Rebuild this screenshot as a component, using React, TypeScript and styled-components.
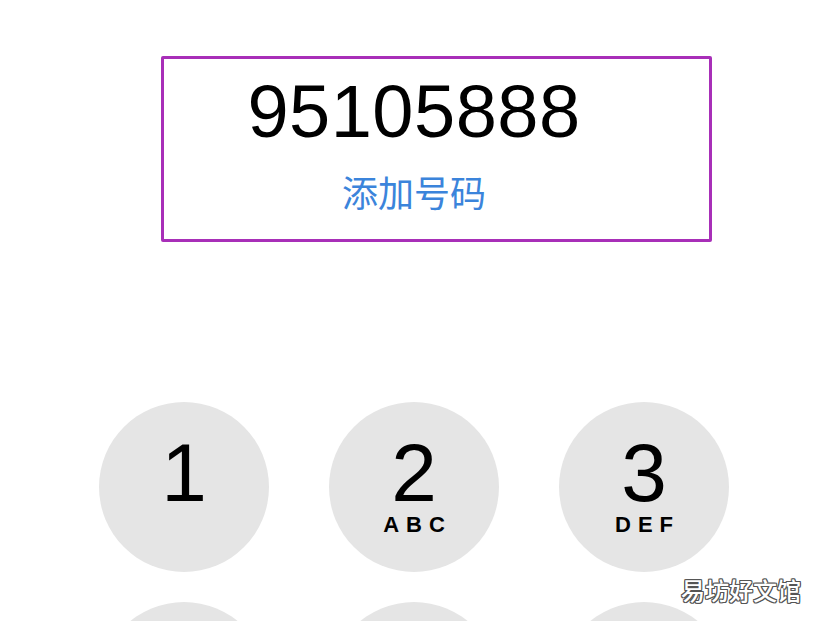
import React from 'react';
import styled, { createGlobalStyle } from 'styled-components';

const GlobalStyle = createGlobalStyle`
  html, body {
    margin: 0;
    padding: 0;
    background: #ffffff;
    overflow: hidden;
  }
  body {
    font-family: "Liberation Sans", Arial, sans-serif;
  }
`;

const Screen = styled.section`
  position: relative;
  width: 828px;
  height: 621px;
  display: flex;
  flex-direction: column;
  align-items: center;
  overflow: hidden;
`;

const Display = styled.div`
  display: flex;
  flex-direction: column;
  align-items: center;
  padding-top: 75px;
`;

const Number = styled.div`
  font-size: 74px;
  line-height: 74px;
  color: #000;
  letter-spacing: 0.5px;
`;

const AddNumber = styled.a`
  margin-top: 24px;
  font-family: "Noto Sans CJK SC", sans-serif;
  font-size: 36px;
  line-height: 36px;
  color: #3b84db;
  cursor: pointer;
`;

const Highlight = styled.div`
  position: absolute;
  left: 161px;
  top: 56px;
  width: 545px;
  height: 180px;
  border: 3px solid #a82fb8;
  border-radius: 2px;
  pointer-events: none;
`;

const Keypad = styled.div`
  margin-top: 193px;
  display: grid;
  grid-template-columns: repeat(3, 170px);
  column-gap: 60px;
  row-gap: 30px;
`;

const Key = styled.button`
  width: 170px;
  height: 170px;
  border: none;
  border-radius: 50%;
  background: #e5e5e5;
  display: flex;
  flex-direction: column;
  align-items: center;
  justify-content: flex-start;
  padding: 30px 0 0;
  font-family: "Liberation Sans", Arial, sans-serif;
  color: #000;
`;

const Digit = styled.span`
  font-size: 82px;
  line-height: 82px;
`;

const Letters = styled.span`
  font-size: 22px;
  line-height: 22px;
  font-weight: 700;
  letter-spacing: 7px;
  padding-left: 7px;
`;

const Watermark = styled.div`
  position: absolute;
  right: 27px;
  bottom: 17px;
  font-family: "Noto Sans CJK SC", sans-serif;
  font-size: 24px;
  line-height: 28px;
  font-weight: 500;
  color: #ffffff;
  text-shadow:
    1px 0 0 #555, -1px 0 0 #555, 0 1px 0 #555, 0 -1px 0 #555,
    1px 1px 0 #555, -1px -1px 0 #555, 1px -1px 0 #555, -1px 1px 0 #555;
`;

const keys = [
  { d: '1', l: '' },
  { d: '2', l: 'ABC' },
  { d: '3', l: 'DEF' },
  { d: '4', l: 'GHI' },
  { d: '5', l: 'JKL' },
  { d: '6', l: 'MNO' },
  { d: '7', l: 'PQRS' },
  { d: '8', l: 'TUV' },
  { d: '9', l: 'WXYZ' },
  { d: '*', l: '' },
  { d: '0', l: '+' },
  { d: '#', l: '' },
];

export default function App() {
  return (
    <>
      <GlobalStyle />
      <Screen>
        <Display>
          <Number>95105888</Number>
          <AddNumber>添加号码</AddNumber>
        </Display>
        <Highlight />
        <Keypad>
          {keys.map((k) => (
            <Key key={k.d}>
              <Digit>{k.d}</Digit>
              {k.l && <Letters>{k.l}</Letters>}
            </Key>
          ))}
        </Keypad>
        <Watermark>易坊好文馆</Watermark>
      </Screen>
    </>
  );
}
